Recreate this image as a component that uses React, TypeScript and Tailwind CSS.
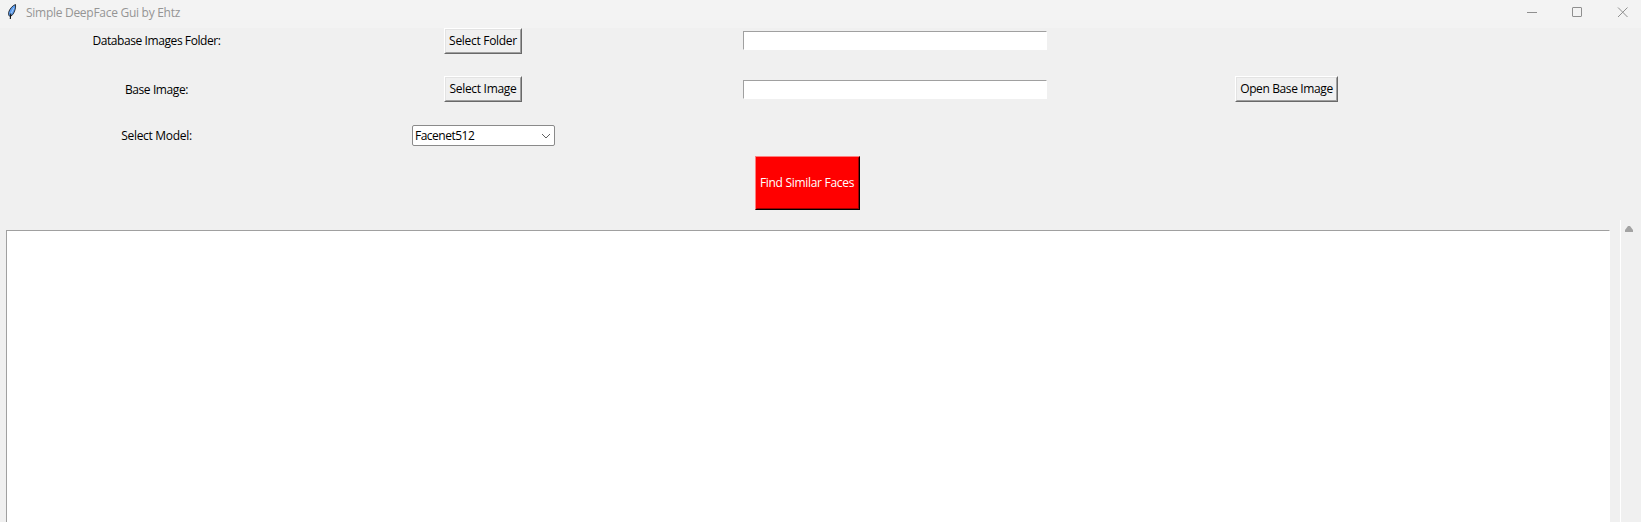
import React from "react";

function Label({ children, className }: { children: string; className: string }) {
  return <span className={`block whitespace-nowrap text-center text-[12px] leading-[16px] text-black ${className}`}>{children}</span>;
}

function RaisedButton({ children, className }: { children: string; className: string }) {
  return (
    <button className={`h-[26px] border border-t-white border-l-white border-r-[#696969] border-b-[#696969] bg-[#f0f0f0] ${className}`}>
      <span className="flex h-full items-center justify-center whitespace-nowrap border border-t-[#e3e3e3] border-l-[#e3e3e3] border-r-[#a0a0a0] border-b-[#a0a0a0] text-[12px] leading-[16px] text-black">
        {children}
      </span>
    </button>
  );
}

function Entry({ className }: { className: string }) {
  return <input className={`h-[19px] w-[304px] border border-t-[#a0a0a0] border-l-[#a0a0a0] border-r-white border-b-white bg-white outline-none ${className}`} />;
}

function Feather() {
  return (
    <svg width="16" height="18" viewBox="0 0 16 18" fill="none">
      <path d="M11.500 1.500C8.500 2.500 5.500 6 4.600 9.500L4.800 12.500L6.300 13.500L8.800 11.500C10.800 8.500 12 5 11.500 1.500Z" fill="#5c9df0" stroke="#1c2026" strokeWidth="0.900" />
      <path d="M9.800 5L6.800 11" stroke="#a9cdf8" strokeWidth="0.900" />
      <path d="M6.800 10.500L6.300 16" stroke="#101010" strokeWidth="1.100" />
    </svg>
  );
}

export default function App() {
  return (
    <div className="flex h-[522px] w-[1641px] flex-col overflow-hidden bg-[#f0f0f0] font-['Open_Sans','Noto_Sans',sans-serif]">
      <header className="flex h-[28px] shrink-0 items-center bg-[#f3f3f3]">
        <div className="flex w-[26px] justify-center pb-[4px] pr-[2px]"><Feather /></div>
        <span className="flex-1 whitespace-nowrap pb-[2px] text-[12px] leading-[16px] tracking-[-0.28px] text-[#959595]">Simple DeepFace Gui by Ehtz</span>
        <svg width="120" height="28" viewBox="0 0 120 28" fill="none" stroke="#8f8f8f">
          <path d="M6 12.500H16" />
          <rect x="51.500" y="7.500" width="9" height="9" rx="0.500" />
          <path d="M97 7.500L106.500 17M106.500 7.500L97 17" />
        </svg>
      </header>

      <main className="flex min-h-0 flex-1 flex-col">
        <section className="grid shrink-0 grid-cols-[313px_341px_482px_301px] grid-rows-[48px_49px_31px] justify-items-center">
          <Label className="mt-[5px] tracking-[-0.42px]">Database Images Folder:</Label>
          <RaisedButton className="mr-[1px] w-[78px] tracking-[-0.3px]">Select Folder</RaisedButton>
          <Entry className="mt-[3px]" />
          <span />

          <Label className="mt-[6px] tracking-[-0.4px]">Base Image:</Label>
          <RaisedButton className="mr-[1px] w-[78px] tracking-[-0.3px]">Select Image</RaisedButton>
          <Entry className="mt-[4px]" />
          <RaisedButton className="w-[103px] tracking-[-0.38px]">Open Base Image</RaisedButton>

          <Label className="mt-[3px] tracking-[-0.3px]">Select Model:</Label>
          <div className="flex h-[21px] w-[143px] items-center justify-between rounded-[2px] border border-[#8a8a8a] bg-white pl-[2px] pr-[3px]">
            <span className="text-[12px] leading-[16px] tracking-[-0.5px] text-black">Facenet512</span>
            <svg width="10" height="6" viewBox="0 0 10 6" fill="none" stroke="#606060"><path d="M1 1L5 5L9 1" /></svg>
          </div>
        </section>

        <div className="flex w-[1615px] shrink-0 justify-center">
          <button className="h-[54px] w-[105px] border border-t-[#ff7f7f] border-l-[#ff7f7f] border-r-black border-b-black bg-[#ff0000]">
            <span className="flex h-full items-center justify-center whitespace-nowrap border border-t-[#ff0000] border-l-[#ff0000] border-r-[#990000] border-b-[#990000] pr-[1px] text-[12px] leading-[16px] tracking-[-0.3px] text-white">
              Find Similar Faces
            </span>
          </button>
        </div>

        <section className="flex min-h-0 flex-1 pt-[10px]">
          <div className="ml-[6px] mt-[10px] w-[1604px] border-l border-r border-t border-l-[#a0a0a0] border-r-white border-t-[#a0a0a0] bg-white" />
          <div className="ml-[10px] flex-1 border-l border-white pl-[4px] pt-[6px]">
            <svg width="8" height="6" viewBox="0 0 8 6"><path d="M3 0H5L8 4V6H0V4Z" fill="#a3a3a3" /></svg>
          </div>
        </section>
      </main>
    </div>
  );
}
